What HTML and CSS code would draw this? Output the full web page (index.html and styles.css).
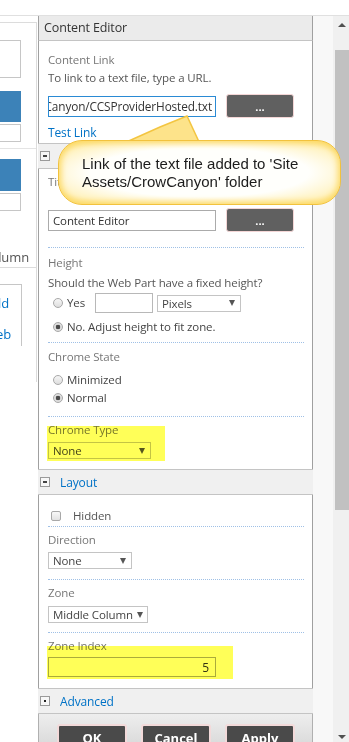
FILE: index.html
```html
<!DOCTYPE html>
<html>

<head>
  <title>Content Editor - Tool Pane</title>
  <link rel="stylesheet" href="styles.css">
</head>

<body>
  <div class="topbar"></div>

  <div class="main">
    <!-- page behind the tool pane, mostly cut off -->
    <div class="leftcol">
      <div class="lc-frame">
        <div class="lc-box lc-box1"></div>
        <div class="lc-blue lc-blue1"></div>
        <div class="lc-box lc-box2"></div>
        <div class="lc-group">
          <div class="lc-blue lc-blue2"></div>
          <div class="lc-box lc-box3"></div>
        </div>
        <div class="lc-zone"><span>Middle Column</span></div>
        <div class="lc-links">
          <a class="lc-link lc-link1"><span>Add a Web Part Field</span></a>
          <a class="lc-link lc-link2"><span>Add an App Web</span></a>
        </div>
      </div>
    </div>

    <div class="panel">
      <div class="pane-title">Content Editor</div>

      <div class="cat-body body1">
        <div class="lbl first">Content Link</div>
        <div class="desc">To link to a text file, type a URL.</div>
        <div class="field-row">
          <div class="textbox active"><span>/sites/dev/SiteAssets/CrowCanyon/CCSProviderHosted.txt</span></div>
          <button class="dots">...</button>
        </div>
        <a class="link test-link">Test Link</a>
      </div>

      <div class="cat-head"><span class="toggle minus"></span><a class="link">Appearance</a></div>

      <div class="cat-body body2">
        <div class="field f-title">
          <div class="lbl">Title</div>
          <div class="field-row">
            <div class="textbox"><span>Content Editor</span></div>
            <button class="dots">...</button>
          </div>
        </div>

        <div class="field f-height">
          <div class="lbl">Height</div>
          <div class="desc">Should the Web Part have a fixed height?</div>
          <div class="opt-row">
            <input type="radio" class="rb" name="height">
            <span class="opt">Yes</span>
            <div class="textbox small"></div>
            <div class="select sel-pixels"><span>Pixels</span><span class="arrow"></span></div>
          </div>
          <div class="opt-row plain">
            <input type="radio" class="rb" name="height" checked>
            <span class="opt">No. Adjust height to fit zone.</span>
          </div>
        </div>

        <div class="field f-state">
          <div class="lbl">Chrome State</div>
          <div class="opt-row plain first">
            <input type="radio" class="rb" name="state">
            <span class="opt">Minimized</span>
          </div>
          <div class="opt-row plain">
            <input type="radio" class="rb" name="state" checked>
            <span class="opt">Normal</span>
          </div>
        </div>

        <div class="field f-type last">
          <div class="lbl">Chrome Type</div>
          <div class="select sel-type"><span>None</span><span class="arrow"></span></div>
          <div class="marker marker-type"></div>
        </div>
      </div>

      <div class="cat-head"><span class="toggle minus"></span><a class="link">Layout</a></div>

      <div class="cat-body body3">
        <div class="field f-hidden">
          <div class="opt-row plain">
            <input type="checkbox" class="cb">
            <span class="opt cb-text">Hidden</span>
          </div>
        </div>

        <div class="field f-dir">
          <div class="lbl">Direction</div>
          <div class="select sel-dir"><span>None</span><span class="arrow"></span></div>
        </div>

        <div class="field f-zone">
          <div class="lbl">Zone</div>
          <div class="select sel-zone"><span>Middle Column</span><span class="arrow"></span></div>
        </div>

        <div class="field f-index last">
          <div class="lbl">Zone Index</div>
          <div class="textbox index"><span>5</span></div>
          <div class="marker marker-index"></div>
        </div>
      </div>

      <div class="cat-head"><span class="toggle plus"></span><a class="link">Advanced</a></div>

      <div class="pane-footer">
        <button class="btn">OK</button>
        <button class="btn">Cancel</button>
        <button class="btn">Apply</button>
      </div>
    </div>

    <div class="scrollarea">
      <div class="sa-gap"></div>
      <div class="sbar">
        <div class="sb-up"></div>
        <div class="sb-thumb"></div>
        <div class="sb-down"></div>
      </div>
    </div>
  </div>

  <!-- annotation callout -->
  <svg class="callout-tail" width="90" height="40" viewBox="0 0 90 40">
    <polygon points="2,31 40,14 67,3 80,31" fill="#fde38a" stroke="#f3c541" stroke-width="1.5" />
  </svg>
  <div class="callout">Link of the text file added to 'Site Assets/CrowCanyon' folder</div>
</body>

</html>
```

FILE: styles.css
```css
* {
  box-sizing: border-box;
}

body {
  margin: 0;
  width: 349px;
  height: 742px;
  overflow: hidden;
  position: relative;
  background-color: #ffffff;
  font-family: "Segoe UI", "Open Sans", sans-serif;
  font-size: 11.5px;
  letter-spacing: -0.12px;
  color: #444;
}

.topbar {
  height: 16px;
  border-bottom: 1px solid #e0e0e0;
}

.main {
  display: flex;
  height: 726px;
}

/* left page fragment */
.leftcol {
  width: 38px;
}

.lc-frame {
  margin-top: 6px;
  width: 37px;
  height: 360px;
  border-top: 1px solid #dcdcdc;
  border-right: 1px solid #dcdcdc;
}

.lc-box {
  width: 21px;
  border: 1px solid #c6c6c6;
  border-left: none;
  background-color: #fff;
}

.lc-box1 {
  margin-top: 17px;
  height: 38px;
}

.lc-blue {
  width: 21px;
  background-color: #3c82b8;
}

.lc-blue1 {
  margin-top: 13px;
  height: 31px;
}

.lc-box2 {
  margin-top: 2px;
  height: 18px;
}

.lc-group {
  margin-top: 6px;
  border-top: 1px solid #e4e4e4;
  padding-top: 10px;
}

.lc-blue2 {
  height: 32px;
}

.lc-box3 {
  margin-top: 2px;
  height: 18px;
}

.lc-zone {
  display: flex;
  justify-content: flex-end;
  width: 36px;
  margin-top: 37px;
  padding: 0 7px 1px 0;
  font-size: 13px;
  line-height: 18px;
  color: #555;
  white-space: nowrap;
  border-bottom: 1px solid #dcdcdc;
}

.lc-links {
  margin-top: 16px;
  width: 22px;
  height: 62px;
  border-top: 1px solid #c6c6c6;
  border-right: 1px solid #c6c6c6;
}

.lc-link {
  display: flex;
  justify-content: flex-end;
  white-space: nowrap;
  color: #0072c6;
  font-size: 13px;
  line-height: 18px;
}

.lc-link1 {
  width: 9px;
  margin-top: 9px;
}

.lc-link2 {
  width: 11px;
  margin-top: 13px;
}

/* tool pane */
.panel {
  width: 275px;
  display: flex;
  flex-direction: column;
}

.panel > * {
  flex-shrink: 0;
}

.pane-title {
  height: 25px;
  padding-left: 5px;
  line-height: 24px;
  font-size: 12.5px;
  color: #333;
  background-color: #ebebeb;
  border-left: 1px solid #a0a0a0;
  border-right: 1px solid #a0a0a0;
  border-bottom: 1px solid #c4c4c4;
}

.cat-body {
  background-color: #fff;
  border-left: 1px solid #a0a0a0;
  border-right: 1px solid #a0a0a0;
  padding: 0 8px 0 9px;
}

.body1 {
  height: 102px;
}

.body2 {
  height: 300px;
}

.body3 {
  height: 193px;
}

.cat-head {
  height: 26px;
  display: flex;
  align-items: center;
  gap: 10px;
  padding-left: 2px;
  background-color: #f0f0f0;
  border-top: 1px solid #c4c4c4;
  border-bottom: 1px solid #c4c4c4;
}

.toggle {
  width: 10px;
  height: 10px;
  border: 1px solid #9a9a9a;
  background-color: #f7f7f7;
  position: relative;
}

.toggle::before {
  content: "";
  position: absolute;
  left: 2px;
  top: 3px;
  width: 4px;
  height: 2px;
  background-color: #444;
}

.toggle.plus::before {
  left: 3px;
  top: 3px;
  width: 2px;
  height: 2px;
  background-color: #222;
}

.link {
  color: #0072c6;
  font-size: 12px;
  text-decoration: none;
}

.lbl {
  line-height: 18px;
  color: #777;
}

.desc {
  line-height: 18px;
  color: #555;
}

.body1 .first {
  margin-top: 10px;
}

.field-row {
  display: flex;
  align-items: center;
  gap: 10px;
  margin-top: 7px;
  height: 24px;
}

.textbox {
  width: 168px;
  height: 21px;
  border: 1px solid #ababab;
  background-color: #fff;
  display: flex;
  align-items: center;
  padding: 0 4px;
  overflow: hidden;
  white-space: nowrap;
  color: #333;
}

.textbox.active {
  border-color: #2a8ad4;
  justify-content: flex-end;
  padding-right: 3px;
  font-size: 11.8px;
}

.dots {
  width: 68px;
  height: 24px;
  border: 1px solid #f4d6d6;
  border-radius: 3px;
  background-color: #606060;
  color: #fff;
  font-family: "Open Sans", sans-serif;
  font-weight: bold;
  font-size: 11px;
  padding: 0;
}

.test-link {
  display: block;
  margin-top: 6px;
  line-height: 18px;
}

.field {
  border-bottom: 1px dotted #9fc0e6;
  position: relative;
}

.field.last {
  border-bottom: none;
}

.f-title {
  padding: 4px 0 15px;
}

.f-title .field-row {
  margin-top: 17px;
}

.f-height {
  padding: 6px 0 6px;
}

.f-height .desc {
  margin-top: 2px;
}

.opt-row {
  display: flex;
  align-items: center;
  height: 20px;
  margin-top: 1px;
}

.opt-row.plain {
  height: 18px;
  margin-top: 5px;
}

.f-state .opt-row.plain {
  margin-top: 0;
}

.f-state .opt-row.first {
  margin-top: 5px;
}

.rb {
  appearance: none;
  -webkit-appearance: none;
  margin: 0 4px 0 5px;
  width: 10px;
  height: 10px;
  border: 1px solid #a8a8a8;
  border-radius: 50%;
  background: linear-gradient(#f6f6f6, #dedede);
}

.rb:checked {
  background: radial-gradient(circle, #4a4a4a 0, #4a4a4a 2px, #dedede 2.6px);
}

.cb {
  appearance: none;
  -webkit-appearance: none;
  margin: 0 0 0 3px;
  width: 10px;
  height: 10px;
  border: 1px solid #a8a8a8;
  border-radius: 2px;
  background: linear-gradient(#f8f8f8, #e2e2e2);
}

.opt {
  line-height: 18px;
  color: #444;
}

.cb-text {
  margin-left: 12px;
  color: #555;
}

.textbox.small {
  width: 58px;
  height: 20px;
  margin-left: 10px;
  border-color: #b8b8b8;
}

.select {
  height: 17px;
  border: 1px solid #c4c4c4;
  background-color: #fff;
  display: flex;
  align-items: center;
  justify-content: space-between;
  padding: 0 5px 0 4px;
  color: #444;
  white-space: nowrap;
}

.select .arrow {
  width: 0;
  height: 0;
  border-left: 3.5px solid transparent;
  border-right: 3.5px solid transparent;
  border-top: 6px solid #555;
}

.sel-pixels {
  width: 84px;
  margin-left: 4px;
}

.f-state {
  padding: 5px 0 9px;
}

.f-type {
  padding: 4px 0 10px;
}

.sel-type {
  width: 103px;
  margin-top: 3px;
}

.f-hidden {
  padding: 12px 0 1px;
}

.f-hidden .opt-row.plain {
  margin-top: 0;
}

.f-dir {
  padding: 4px 0 10px;
}

.sel-dir {
  width: 84px;
  margin-top: 3px;
}

.f-zone {
  padding: 4px 0 9px;
}

.sel-zone {
  width: 100px;
  margin-top: 4px;
  padding-right: 4px;
}

.f-index {
  padding: 4px 0 11px;
}

.textbox.index {
  height: 20px;
  margin-top: 2px;
  justify-content: flex-end;
  padding-right: 6px;
  font-size: 12px;
}

/* highlighter marks */
.marker {
  position: absolute;
  left: -1px;
  background-color: #ffff58;
  mix-blend-mode: multiply;
}

.marker-type {
  top: 9px;
  width: 118px;
  height: 35px;
}

.marker-index {
  top: 13px;
  width: 186px;
  height: 33px;
}

.pane-footer {
  flex: 1 1 auto;
  min-height: 0;
  overflow: hidden;
  display: flex;
  gap: 14px;
  padding: 10px 0 0 18px;
  background: linear-gradient(#eeeeee, #dcdcdc);
  border-left: 1px solid #b0b0b0;
  border-right: 1px solid #b0b0b0;
}

.btn {
  flex-shrink: 0;
  width: 70px;
  height: 26px;
  border: 2px solid #f3dada;
  border-radius: 3px;
  background-color: #4a4a4a;
  color: #fff;
  font-family: "Open Sans", sans-serif;
  font-weight: bold;
  font-size: 13px;
  padding: 2px 0 0;
}

/* scrollbar */
.scrollarea {
  flex: 1;
  display: flex;
}

.sa-gap {
  width: 20px;
  background-color: #f8f8f8;
}

.sbar {
  flex: 1;
  display: flex;
  flex-direction: column;
  background-color: #f0f0f0;
  padding-left: 2px;
}

.sb-up {
  height: 34px;
  position: relative;
}

.sb-up::before {
  content: "";
  position: absolute;
  left: 3px;
  top: 7px;
  border-left: 4px solid transparent;
  border-right: 4px solid transparent;
  border-bottom: 4px solid #505050;
}

.sb-thumb {
  height: 460px;
  background-color: #c1c1c1;
}

.sb-down {
  flex: 1;
  position: relative;
}

.sb-down::before {
  content: "";
  position: absolute;
  left: 3px;
  bottom: 3px;
  border-left: 4px solid transparent;
  border-right: 4px solid transparent;
  border-top: 4px solid #505050;
}

/* callout */
.callout {
  position: absolute;
  left: 58px;
  top: 140px;
  width: 283px;
  height: 65px;
  padding: 14px 10px 0 23px;
  border: 1px solid #f2c23d;
  border-radius: 24px;
  background: radial-gradient(ellipse at center, #fffffc 55%, #fff3c4 80%, #fddc6e 100%);
  box-shadow: inset 0 0 6px 2px #fcd860;
  font-family: "Liberation Sans", Arial, sans-serif;
  font-size: 15px;
  letter-spacing: 0;
  line-height: 18px;
  color: #1c1c1c;
}

.callout-tail {
  position: absolute;
  left: 120px;
  top: 113px;
}
```
